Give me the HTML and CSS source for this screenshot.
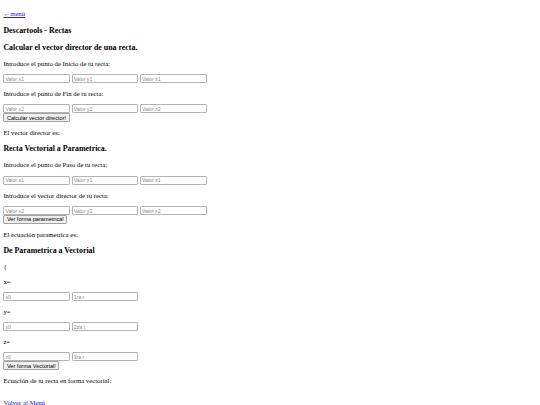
FILE: index.html
```html
<!DOCTYPE html>
<html lang="es">
<head>
<meta charset="utf-8">
<title>Descartools - Rectas</title>
<link rel="stylesheet" href="styles.css">
</head>
<body class="page">
<p class="para"><a class="link" href="#">←menú</a></p>
<h3 class="section">Descartools - Rectas</h3>
<h3 class="section">Calcular el vector director de una recta.</h3>
<p class="para">Introduce el punto de Inicio de tu recta:</p>
<input class="field" type="text" placeholder="Valor x1"> <input class="field" type="text" placeholder="Valor y1"> <input class="field" type="text" placeholder="Valor z1">
<p class="para">Introduce el punto de Fin de tu recta:</p>
<input class="field" type="text" placeholder="Valor x2"> <input class="field" type="text" placeholder="Valor y2"> <input class="field" type="text" placeholder="Valor z2"><br>
<button class="btn" type="button">Calcular vector director!</button>
<p class="para">El vector director es:</p>
<h3 class="section">Recta Vectorial a Parametrica.</h3>
<p class="para">Introduce el punto de Paso de tu recta:</p>
<input class="field" type="text" placeholder="Valor x1"> <input class="field" type="text" placeholder="Valor y1"> <input class="field" type="text" placeholder="Valor z1">
<p class="para">Introduce el vector director de tu recta:</p>
<input class="field" type="text" placeholder="Valor x2"> <input class="field" type="text" placeholder="Valor y2"> <input class="field" type="text" placeholder="Valor z2"><br>
<button class="btn" type="button">Ver forma parametrica!</button>
<p class="para">El ecuación parametrica es:</p>
<h3 class="section">De Parametrica a Vectorial</h3>
<p class="para">{</p>
<p class="para">x=</p>
<input class="field" type="text" placeholder="x0"> <input class="field" type="text" placeholder="1ra t">
<p class="para">y=</p>
<input class="field" type="text" placeholder="y0"> <input class="field" type="text" placeholder="2da t">
<p class="para">z=</p>
<input class="field" type="text" placeholder="z0"> <input class="field" type="text" placeholder="3ra t"><br>
<button class="btn" type="button">Ver forma Vectorial!</button>
<p class="para">Ecuación de tu recta en forma vectorial:</p>
<br>
<a class="link" href="#">Volver al Menú</a>
</body>
</html>
```

FILE: styles.css
```css
.page {
  margin: 3.375px;
  font-family: "Liberation Serif", "Times New Roman", serif;
  font-size: 6.75px;
  line-height: 7.76px;
  color: #000;
  background: #fff;
}

.link {
  color: #2020e6;
  text-decoration: underline;
}

.section {
  font-size: 7.9px;
  line-height: 9.08px;
  margin: 7.9px 0;
  font-weight: bold;
}

.para {
  margin: 6.75px 0;
  line-height: 7.76px;
}

.field {
  box-sizing: border-box;
  width: 66.6px;
  height: 8.86px;
  margin: 0;
  padding: 0 1px;
  font-family: "Liberation Sans", Arial, sans-serif;
  font-size: 5.2px;
  color: #000;
  background: #fff;
  border: 1px solid #b4b4b4;
  border-radius: 1px;
  vertical-align: top;
}

.field::placeholder {
  color: #8c8c8c;
}

.btn {
  box-sizing: border-box;
  height: 8.86px;
  margin: 0;
  padding: 0 2.5px;
  font-family: "Liberation Sans", Arial, sans-serif;
  font-size: 5.625px;
  line-height: 6px;
  color: #000;
  background: #efefef;
  border: 1px solid #a3a3a3;
  border-radius: 1px;
  vertical-align: top;
}
```
